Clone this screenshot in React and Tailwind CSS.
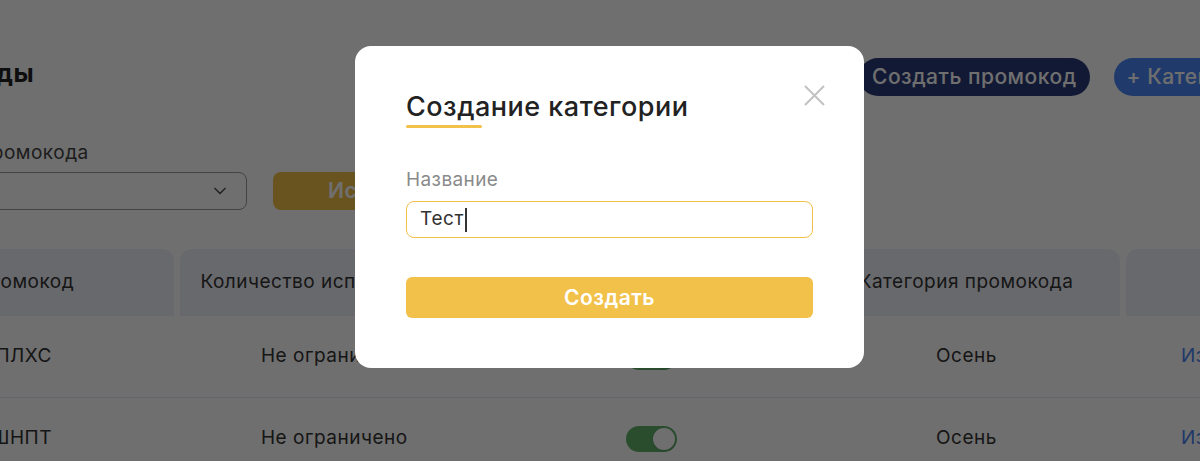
import { ChevronDown } from 'lucide-react'

const rows = [
  { code: 'КЗПЛХС', limit: 'Не ограничено', category: 'Осень' },
  { code: 'ВЖШНПТ', limit: 'Не ограничено', category: 'Осень' },
]

const columns = ['Промокод', 'Количество использований', 'Активность', 'Категория промокода', 'Действия']

function Toggle() {
  return (
    <span className="inline-flex h-[26px] w-[51px] items-center justify-end rounded-full bg-[#62b06b] p-[2px]">
      <span className="h-[22px] w-[22px] rounded-full bg-white shadow" />
    </span>
  )
}

function PromoPage() {
  return (
    <div className="ml-[-126px] w-[1560px] pt-[58px] text-[19px] tracking-[0.5px] text-[#333]">
      <div className="flex items-start">
        <div className="w-[985px] shrink-0">
          <h1 className="-mt-[2px] ml-[4px] text-[25px] font-bold leading-[34px] text-[#222]">Промокоды</h1>
        </div>
        <div className="flex items-center gap-[24px]">
          <button className="h-[38px] rounded-full bg-[#2b3a78] px-[13px] text-[21px] font-medium tracking-[0.5px] text-white">
            Создать промокод
          </button>
          <button className="h-[38px] rounded-full bg-[#4a85f5] px-[13px] text-[21px] font-medium tracking-[0.5px] text-white">
            + Категория
          </button>
        </div>
      </div>

      <div className="mt-[45px] leading-[24px] text-[#444]">Категория промокода</div>
      <div className="mt-[7px] flex items-center gap-[26px]">
        <div className="flex h-[38px] w-[373px] items-center justify-end rounded-[8px] border border-[#9a9a9a] pr-[16px]">
          <ChevronDown className="h-[20px] w-[20px] text-[#555]" strokeWidth={2} />
        </div>
        <button className="h-[38px] w-[170px] rounded-[8px] bg-[#f2c14a] pl-[55px] text-left text-[21px] font-semibold text-white">
          Искать
        </button>
      </div>

      <div className="mt-[39px] grid grid-cols-[300px_310px_310px_308px_300px] gap-x-[6px]">
        {columns.map((c) => (
          <div
            key={c}
            className="flex h-[67px] items-center justify-center rounded-t-[12px] bg-[#eff0f8] text-[#333]"
          >
            {c}
          </div>
        ))}
      </div>
      {rows.map((r) => (
        <div
          key={r.code}
          className="grid h-[82px] grid-cols-[300px_310px_310px_308px_300px] items-center gap-x-[6px] border-b border-[#e6e7f3]"
        >
          <div className="pr-[122px] text-right">{r.code}</div>
          <div className="pl-[81px]">{r.limit}</div>
          <div className="flex justify-center">
            <Toggle />
          </div>
          <div className="pl-[124px]">{r.category}</div>
          <div className="pl-[55px] text-[#4a80f0]">Изменить</div>
        </div>
      ))}
    </div>
  )
}

export default function App() {
  return (
    <div className="relative h-[461px] w-[1200px] overflow-hidden bg-white font-['Inter',_'Liberation_Sans',_sans-serif]">
      <PromoPage />

      <div className="absolute inset-0 bg-black/[0.565]" />

      <div className="absolute left-[355px] top-[46px] h-[322px] w-[509px] rounded-[16px] bg-white px-[51px] pt-[45px]">
        <button className="absolute right-[39px] top-[39px] h-[21px] w-[21px]">
          <svg viewBox="0 0 21 21" className="h-[21px] w-[21px]" fill="none" stroke="#c2c2c2" strokeWidth="2">
            <path d="M1 1L20 20M20 1L1 20" />
          </svg>
        </button>

        <h2 className="text-[27px] font-medium leading-[32px] tracking-[0.5px] text-[#222]">Создание категории</h2>
        <div className="mt-[2px] h-[3px] w-[76px] rounded-full bg-[#f2c14a]" />

        <div className="mt-[40px] text-[19px] leading-[24px] tracking-[0.4px] text-[#8a8a8a]">Название</div>
        <div className="mt-[9px] flex h-[37px] items-center rounded-[8px] border-[1.5px] border-[#f2c14a] pl-[13px] text-[19px] tracking-[0.6px] text-[#333]">
          <span>Тест</span>
          <span className="ml-[1px] h-[24px] w-[2px] bg-[#333]" />
        </div>

        <button className="mt-[39px] flex h-[41px] w-full items-center justify-center rounded-[6px] bg-[#f2c14a] text-[21px] font-semibold tracking-[0.5px] text-white">
          Создать
        </button>
      </div>
    </div>
  )
}
